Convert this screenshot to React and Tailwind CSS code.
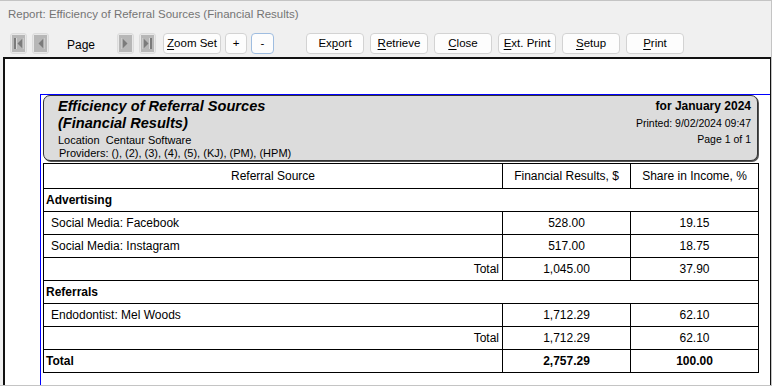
import React from "react";

function NavBtn({ dir, bar }) {
  return (
    <div className="w-[17px] h-[21px] rounded-[3px] border border-[#dcdcdc] bg-[#e8e8e8] p-[1px]">
      <svg width="13" height="17" viewBox="0 0 13 17" className="block">
        <rect x="0" y="0" width="13" height="17" fill="#b7b7b7" />
        {dir === "left" ? (
          <>
            {bar && <rect x="2" y="3" width="2" height="11" fill="#7b7b7b" />}
            {bar && <rect x="4" y="3" width="1" height="11" fill="#d8d8d8" />}
            <polygon points={bar ? "11,3 11,14 5.5,8.5" : "10,3 10,14 4.5,8.5"} fill="#7b7b7b" />
            <polyline points={bar ? "11,3 11,14" : "10,3 10,14"} stroke="#dcdcdc" strokeWidth="1" fill="none" />
          </>
        ) : (
          <>
            <polygon points={bar ? "2,3 2,14 7.5,8.5" : "3,3 3,14 8.5,8.5"} fill="#7b7b7b" />
            <polyline points={bar ? "2,3 2,14" : "3,3 3,14"} stroke="#dcdcdc" strokeWidth="1" fill="none" />
            {bar && <rect x="9" y="3" width="2" height="11" fill="#7b7b7b" />}
            {bar && <rect x="8" y="3" width="1" height="11" fill="#d8d8d8" />}
          </>
        )}
      </svg>
    </div>
  );
}

function Btn({ children, w = "w-[58px]", focus = false }) {
  return (
    <div
      className={`${w} h-[21px] rounded-[4px] border ${
        focus ? "border-[#9fbde0]" : "border-[#d3d3d3]"
      } bg-[#fdfdfd] flex items-center justify-center text-[11.5px] text-black leading-none`}
    >
      {children}
    </div>
  );
}

const U = ({ children }) => <span className="underline underline-offset-[2px]">{children}</span>;

function Cell({ children, className = "" }) {
  return <td className={`border border-black h-[23px] p-0 text-[12px] leading-none ${className}`}>{children}</td>;
}

export default function App() {
  return (
    <div className="w-[772px] h-[386px] bg-[#f0f0f0] overflow-hidden border-t border-r border-b border-[#c4c4c4] font-['Liberation_Sans',Arial,sans-serif] text-black flex flex-col">
      {/* title bar */}
      <div className="h-[27px] pl-[8px] flex items-center text-[11.5px] text-[#747474]">
        Report: Efficiency of Referral Sources (Financial Results)
      </div>
      {/* toolbar */}
      <div className="h-[29px] flex items-start pt-[5px] pl-[10px]">
        <div className="flex gap-[5px]">
          <NavBtn dir="left" bar />
          <NavBtn dir="left" />
        </div>
        <div className="w-[68px] pl-[18px] pt-[3px] text-[12px]">Page</div>
        <div className="flex gap-[5px]">
          <NavBtn dir="right" />
          <NavBtn dir="right" bar />
        </div>
        <div className="ml-[7px] flex gap-[4px]">
          <Btn>
            <U>Z</U>oom Set
          </Btn>
          <Btn w="w-[22px]">+</Btn>
          <Btn w="w-[23px]" focus>
            -
          </Btn>
        </div>
        <div className="ml-[32px] flex gap-[6px]">
          <Btn>
            Ex<U>p</U>ort
          </Btn>
          <Btn>
            <U>R</U>etrieve
          </Btn>
          <Btn>
            <U>C</U>lose
          </Btn>
          <Btn>
            <U>E</U>xt. Print
          </Btn>
          <Btn>
            <U>S</U>etup
          </Btn>
          <Btn>
            <U>P</U>rint
          </Btn>
        </div>
      </div>
      {/* report area */}
      <div className="ml-[3px] flex-1 bg-white border-t-2 border-l-2 border-r border-[#111] overflow-hidden">
        <div className="ml-[35px] mt-[35px] border-l border-t border-[#0000ff] h-full pl-[2px]">
          {/* header box */}
          <div className="w-[715px] h-[66px] rounded-[7px] border border-[#333] bg-[#dcdcdc] shadow-[1px_1px_0_#555] flex justify-between">
            <div className="pl-[14px] pt-[2px]">
              <div className="text-[14.6px] leading-[17px] font-bold italic">Efficiency of Referral Sources</div>
              <div className="text-[14.6px] leading-[17px] font-bold italic">(Financial Results)</div>
              <div className="text-[11px] leading-[14px] mt-[1px]">Location&nbsp;&nbsp;Centaur Software</div>
              <div className="text-[11px] leading-[13px] pl-[1px]">Providers: (), (2), (3), (4), (5), (KJ), (PM), (HPM)</div>
            </div>
            <div className="pr-[6px] pt-[2px] text-right">
              <div className="text-[12px] leading-[17px] font-bold">for January 2024</div>
              <div className="text-[10.5px] leading-[16px]">Printed: 9/02/2024 09:47</div>
              <div className="text-[10.5px] leading-[16px]">Page 1 of 1</div>
            </div>
          </div>
          {/* table */}
          <table className="mt-[2px] w-[715px] border-collapse table-fixed">
            <colgroup>
              <col className="w-[459px]" />
              <col className="w-[128px]" />
              <col className="w-[128px]" />
            </colgroup>
            <tbody>
              <tr>
                <td className="border border-black h-[25px] p-0 text-[12px] leading-none text-center">Referral Source</td>
                <td className="border border-black h-[25px] p-0 text-[12px] leading-none text-center">Financial Results, $</td>
                <td className="border border-black h-[25px] p-0 text-[12px] leading-none text-center">Share in Income, %</td>
              </tr>
              <tr>
                <td colSpan={3} className="border border-black h-[23px] p-0 pl-[2px] text-[12px] leading-none font-bold">
                  Advertising
                </td>
              </tr>
              <tr>
                <Cell className="pl-[7px]">Social Media: Facebook</Cell>
                <Cell className="text-center">528.00</Cell>
                <Cell className="text-center">19.15</Cell>
              </tr>
              <tr>
                <Cell className="pl-[7px]">Social Media: Instagram</Cell>
                <Cell className="text-center">517.00</Cell>
                <Cell className="text-center">18.75</Cell>
              </tr>
              <tr>
                <Cell className="text-right pr-[3px]">Total</Cell>
                <Cell className="text-center">1,045.00</Cell>
                <Cell className="text-center">37.90</Cell>
              </tr>
              <tr>
                <td colSpan={3} className="border border-black h-[23px] p-0 pl-[2px] text-[12px] leading-none font-bold">
                  Referrals
                </td>
              </tr>
              <tr>
                <Cell className="pl-[7px]">Endodontist: Mel Woods</Cell>
                <Cell className="text-center">1,712.29</Cell>
                <Cell className="text-center">62.10</Cell>
              </tr>
              <tr>
                <Cell className="text-right pr-[3px]">Total</Cell>
                <Cell className="text-center">1,712.29</Cell>
                <Cell className="text-center">62.10</Cell>
              </tr>
              <tr>
                <Cell className="font-bold pl-[2px]">Total</Cell>
                <Cell className="text-center font-bold">2,757.29</Cell>
                <Cell className="text-center font-bold">100.00</Cell>
              </tr>
            </tbody>
          </table>
        </div>
      </div>
    </div>
  );
}
